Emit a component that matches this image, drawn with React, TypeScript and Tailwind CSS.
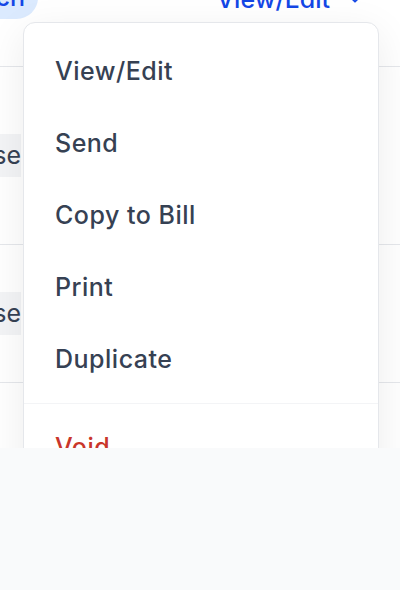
import { ChevronDown } from "lucide-react";

const items = ["View/Edit", "Send", "Copy to Bill", "Print", "Duplicate"];

function StatusBadge() {
  return (
    <div className="flex h-[43px] w-[21px] items-center justify-end overflow-hidden bg-gray-100 text-[25px] text-gray-700">
      <span className="whitespace-nowrap">se</span>
    </div>
  );
}

export default function App() {
  return (
    <div
      className="h-[590px] w-[400px] bg-gray-50"
      style={{ fontFamily: "Inter, 'Noto Sans', sans-serif" }}
    >
      <div className="relative h-[448px] overflow-hidden bg-white">
        {/* page behind the menu */}
        <div className="flex h-[67px] items-start justify-between border-b border-gray-200">
          <div className="-ml-[40px] -mt-[24px] flex h-[43px] w-[78px] items-center justify-end rounded-full bg-blue-100 pr-[13px] text-[25px] font-medium text-blue-700">
            <span className="whitespace-nowrap">ch</span>
          </div>
          <div className="-mt-[19px] mr-[38px] flex items-center gap-[18px] text-[25px] font-medium text-blue-700">
            <span>View/Edit</span>
            <ChevronDown className="h-[14px] w-[14px]" strokeWidth={3} />
          </div>
        </div>
        <div className="flex h-[178px] items-center border-b border-gray-200">
          <StatusBadge />
        </div>
        <div className="flex h-[138px] items-center border-b border-gray-200">
          <StatusBadge />
        </div>
        <div className="h-[120px]" />

        {/* dropdown menu */}
        <div className="absolute left-[23px] top-[22px] w-[356px] rounded-xl border border-gray-200 bg-white pb-3 pt-[13px] shadow-[0_10px_40px_rgba(0,0,0,0.08)]">
          {items.map((item) => (
            <div
              key={item}
              className="flex h-[72px] items-center pl-[31px] pr-8 text-[25px] font-medium tracking-[0.02em] text-gray-700"
            >
              {item}
            </div>
          ))}
          <div className="mb-2 mt-[7px] border-t border-gray-100" />
          <div className="flex h-[72px] items-center pl-[31px] pr-8 text-[25px] font-medium tracking-[0.02em] text-[#c9362b]">
            Void
          </div>
        </div>
      </div>
    </div>
  );
}
